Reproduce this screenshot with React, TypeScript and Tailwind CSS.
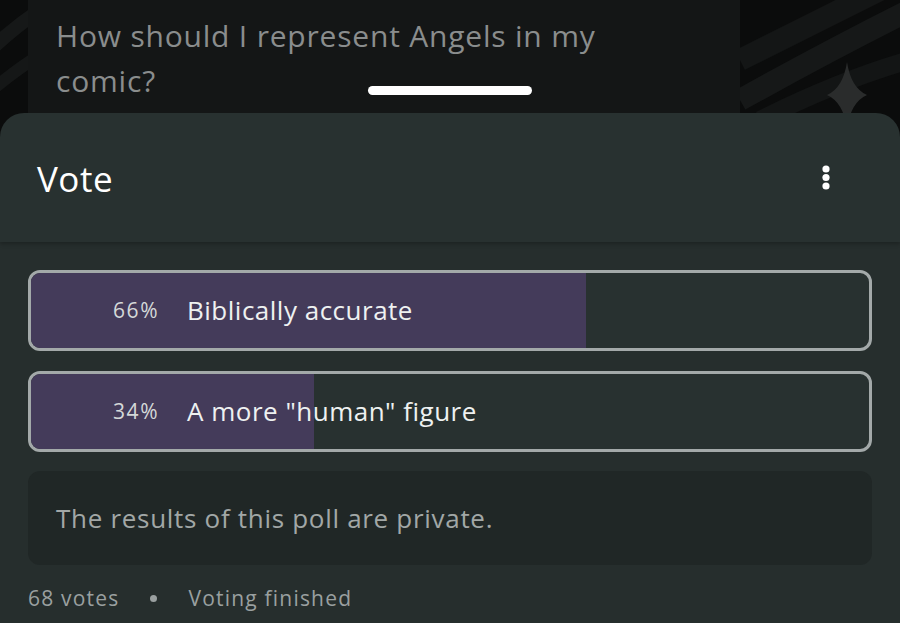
import React from "react";

const font = { fontFamily: "'Open Sans', 'Noto Sans', sans-serif" };

function Option({ pct, label }: { pct: number; label: string }) {
  return (
    <div className="relative h-[81px] rounded-[12px] border-[3px] border-[#a3a9a9] overflow-hidden bg-[#283130]">
      <div className="absolute inset-y-0 left-0 bg-[#443b5a]" style={{ width: `${pct === 66 ? 555 : 283}px` }} />
      <div className="relative flex h-full items-center">
        <span className="w-[128px] text-right text-[21px] tracking-[1.5px] text-[#d4d8d8]">{pct}%</span>
        <span className="ml-[28px] text-[26px] tracking-[0.5px] text-[#eef1f1]">{label}</span>
      </div>
    </div>
  );
}

export default function App() {
  return (
    <div className="relative w-[900px] h-[623px] overflow-hidden bg-[#0b0c0c]" style={font}>
      <svg className="absolute inset-0" width="900" height="623" viewBox="0 0 900 623">
        <path d="M-20 60 Q 10 30 40 10" stroke="#161818" strokeWidth="14" fill="none" />
        <path d="M-20 100 Q 15 70 40 55" stroke="#151717" strokeWidth="12" fill="none" />
        <path d="M740 60 Q 820 20 900 -20" stroke="#141616" strokeWidth="22" fill="none" />
        <path d="M740 100 Q 830 50 910 10" stroke="#161818" strokeWidth="22" fill="none" />
        <path d="M760 120 Q 840 80 910 60" stroke="#131515" strokeWidth="18" fill="none" />
        <path d="M847 62 Q 851 88 867 95 Q 851 102 847 128 Q 843 102 827 95 Q 843 88 847 62 Z" fill="#2a2c2c" />
      </svg>
      <div className="relative h-[113px] pl-[28px]">
        <div className="h-full w-[712px] bg-[#141616] pl-[28px] pt-[13px]">
          <p className="text-[30px] leading-[45px] tracking-[0.8px] text-[#8a8d8d] w-[580px]">How should I represent Angels in my comic?</p>
        </div>
        <div className="absolute left-[368px] top-[86px] h-[9px] w-[164px] rounded-full bg-white" />
      </div>
      <div className="relative rounded-t-[24px] bg-[#283130] h-[510px] overflow-hidden">
        <div className="flex h-[129px] items-center justify-between pl-[37px] pr-[69px] shadow-[0_2px_4px_rgba(0,0,0,0.25)] relative z-10">
          <span className="text-[35px] tracking-[0.5px] text-white pt-[3px]">Vote</span>
          <svg width="10" height="26" viewBox="0 0 10 26">
            <circle cx="5" cy="4" r="3.6" fill="#fff" />
            <circle cx="5" cy="12.5" r="3.6" fill="#fff" />
            <circle cx="5" cy="21" r="3.6" fill="#fff" />
          </svg>
        </div>
        <div className="bg-[#262e2d] h-full px-[28px] pt-[28px]">
          <div className="flex flex-col gap-[20px]">
            <Option pct={66} label="Biblically accurate" />
            <Option pct={34} label={'A more "human" figure'} />
          </div>
          <div className="mt-[19px] h-[94px] rounded-[12px] bg-[#202726] flex items-center pl-[28px]">
            <span className="text-[26px] tracking-[0.7px] text-[#a2a7a6]">The results of this poll are private.</span>
          </div>
          <div className="mt-[18px] flex items-center text-[21px] text-[#9aa0a0] tracking-[1.2px]">
            <span>68 votes</span>
            <span className="ml-[31px] h-[7px] w-[7px] rounded-full bg-[#9aa0a0]" />
            <span className="ml-[31px]">Voting finished</span>
          </div>
        </div>
      </div>
    </div>
  );
}
